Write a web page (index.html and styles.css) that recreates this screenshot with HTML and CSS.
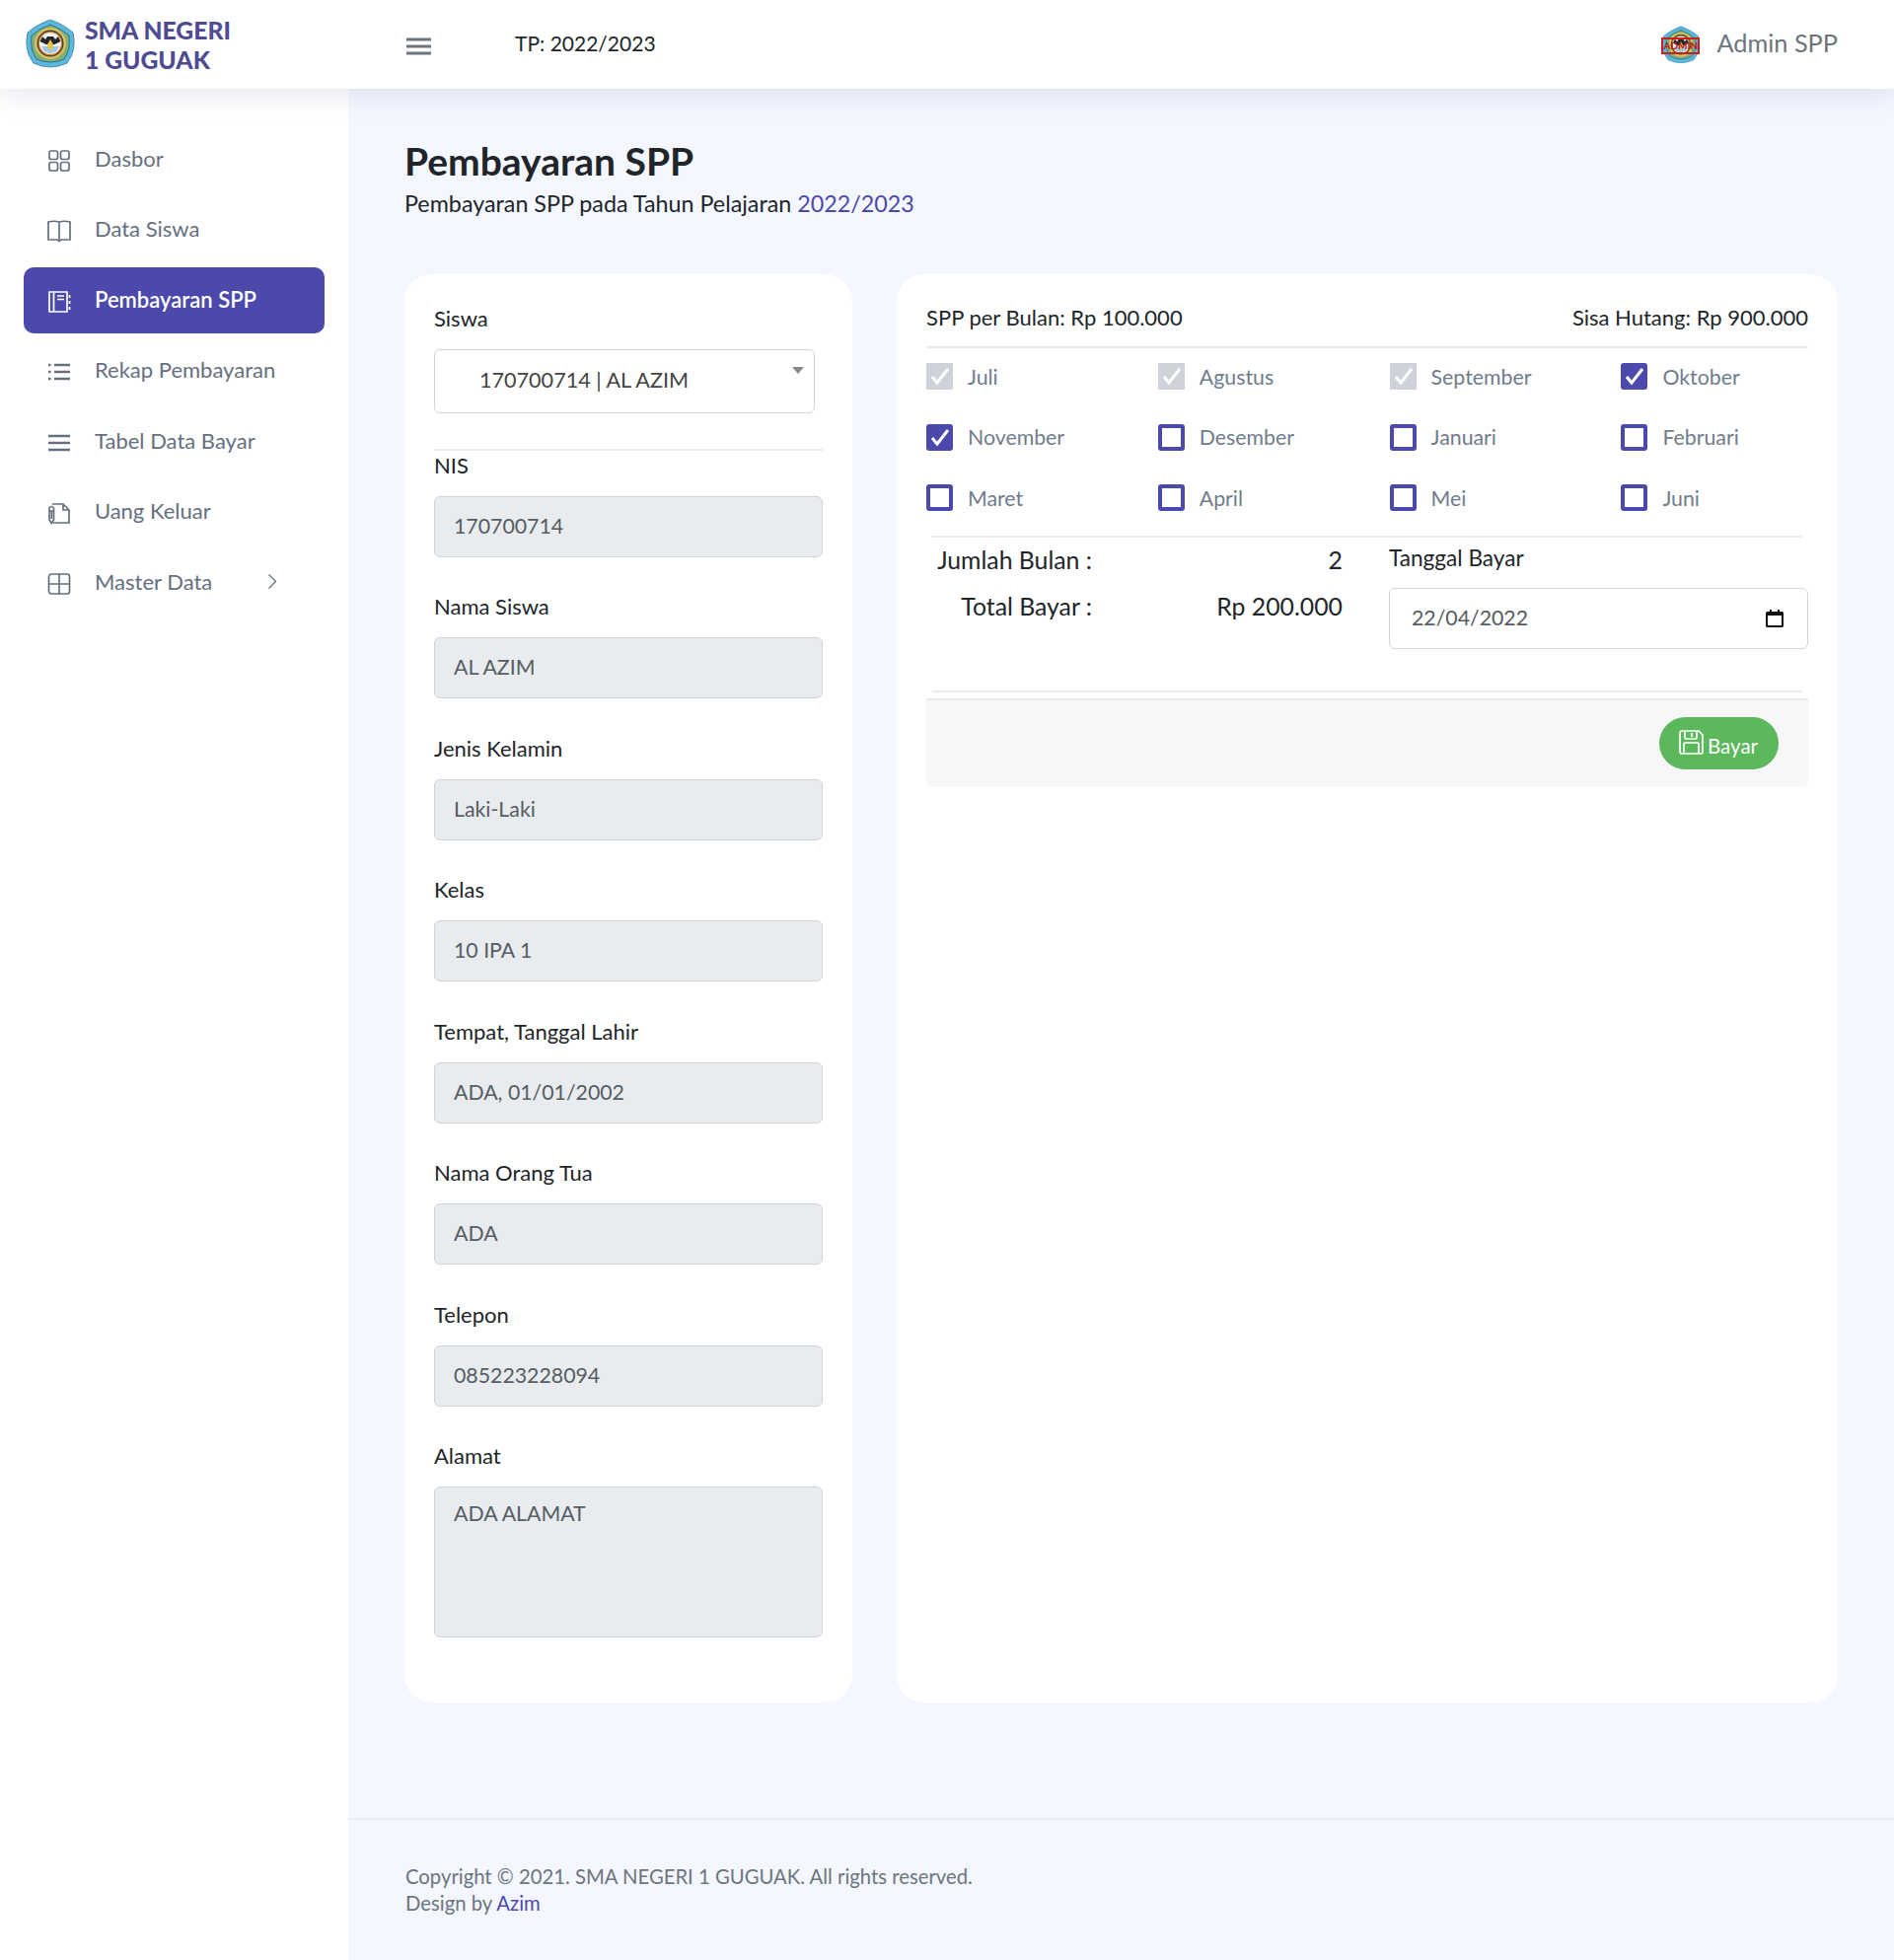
FILE: index.html
```html
<!DOCTYPE html>
<html lang="id">
<head>
<meta charset="utf-8">
<title>Pembayaran SPP</title>
<link rel="stylesheet" href="styles.css">
</head>
<body>
<svg class="defs" width="0" height="0" aria-hidden="true">
  <symbol id="emblem" viewBox="0 0 52 52">
    <path d="M26 1Q40 6 49 14Q53 32 43 45Q26 53 9 45Q-1 32 3 14Q12 6 26 1Z" fill="#5ab7de" stroke="#4f8fa8" stroke-width="1"/>
    <path d="M26 6Q37 10 45 17Q47 31 40 41Q26 47 12 41Q5 31 7 17Q15 10 26 6Z" fill="#7fae78" stroke="#2f6f8f" stroke-width="1"/>
    <circle cx="26" cy="25" r="16" fill="#d9c25a"/>
    <circle cx="26" cy="25" r="13.500" fill="#3e3a34"/>
    <circle cx="26" cy="25" r="12.300" fill="#d2772c"/>
    <circle cx="26" cy="25" r="11" fill="#eef3f8"/>
    <path d="M15.500 23 18 18l3 3 2-3h6l2 3 3-3 2.500 5-6 3H21.500Z" fill="#23252a"/>
    <path d="M17 28h18l-3 5-6 2.500-6-2.500Z" fill="#9cc8e6"/>
    <path d="M26 21l3.500 6-3.500 6-3.500-6Z" fill="#e8c24a"/>
  </symbol>
</svg>
<header class="topbar">
  <div class="brand">
    <svg class="brand-logo"><use href="#emblem"/></svg>
    <div class="brand-name">SMA NEGERI<br>1 GUGUAK</div>
  </div>
  <svg class="burger" viewBox="0 0 25 18"><path d="M0 2h25M0 9h25M0 16h25"/></svg>
  <div class="period">TP: 2022/2023</div>
  <div class="user">
    <div class="user-logo">
      <svg class="user-emblem"><use href="#emblem"/></svg>
      <span class="user-stamp">ADMIN</span>
    </div>
    <span class="user-name">Admin SPP</span>
  </div>
</header>
<div class="shell">
  <aside class="sidebar">
    <ul class="menu">
      <li class="menu-item"><svg class="ico" viewBox="0 0 24 24"><rect x="2" y="2" width="8.500" height="8.500" rx="2"/><rect x="13.500" y="2" width="8.500" height="8.500" rx="2"/><rect x="2" y="13.500" width="8.500" height="8.500" rx="2"/><rect x="13.500" y="13.500" width="8.500" height="8.500" rx="2"/></svg><span>Dasbor</span></li>
      <li class="menu-item"><svg class="ico" viewBox="0 0 24 24"><path d="M1 3q6-1.500 11 0q5-1.500 11 0v18H14l-2 1.500L10 21H1ZM12 3v18"/></svg><span>Data Siswa</span></li>
      <li class="menu-item active"><svg class="ico" viewBox="0 0 24 24"><path d="M2 2h18v20H2ZM6.500 2v20M10 6h7M10 9.500h7M22.500 5v3M22.500 11v3M22.500 17v3"/></svg><span>Pembayaran SPP</span></li>
      <li class="menu-item"><svg class="ico heavy" viewBox="0 0 24 24"><path d="M7 5h16M7 12h16M7 19h16M1 5h2.500M1 12h2.500M1 19h2.500"/></svg><span>Rekap Pembayaran</span></li>
      <li class="menu-item"><svg class="ico heavy" viewBox="0 0 24 24"><path d="M1 5h22M1 12h22M1 19h22"/></svg><span>Tabel Data Bayar</span></li>
      <li class="menu-item"><svg class="ico" viewBox="0 0 24 24"><path d="M5 3h11l6 6v13H6M16 3v6h6M2 7q2-3 4.500 0v12l-2.200 3.500L2 19ZM2 10h4.500M4.300 10v8"/></svg><span>Uang Keluar</span></li>
      <li class="menu-item"><svg class="ico" viewBox="0 0 24 24"><rect x="1.500" y="2" width="21" height="20" rx="2.500"/><path d="M12 2v20M1.500 12h21"/></svg><span>Master Data</span><svg class="chevron" viewBox="0 0 8 15"><path d="M.5 .5 7.500 7.500l-7 7"/></svg></li>
    </ul>
  </aside>
  <main class="main">
    <div class="content">
      <h1 class="title">Pembayaran SPP</h1>
      <p class="subtitle">Pembayaran SPP pada Tahun Pelajaran <span class="accent">2022/2023</span></p>
      <div class="cards">
        <section class="card student">
          <div class="label">Siswa</div>
          <div class="select"><span>170700714 | AL AZIM</span><i class="caret"></i></div>
          <hr class="rule">
          <div class="field"><div class="label">NIS</div><div class="input ro">170700714</div></div>
          <div class="field"><div class="label">Nama Siswa</div><div class="input ro">AL AZIM</div></div>
          <div class="field"><div class="label">Jenis Kelamin</div><div class="input ro">Laki-Laki</div></div>
          <div class="field"><div class="label">Kelas</div><div class="input ro">10 IPA 1</div></div>
          <div class="field"><div class="label">Tempat, Tanggal Lahir</div><div class="input ro">ADA, 01/01/2002</div></div>
          <div class="field"><div class="label">Nama Orang Tua</div><div class="input ro">ADA</div></div>
          <div class="field"><div class="label">Telepon</div><div class="input ro">085223228094</div></div>
          <div class="field"><div class="label">Alamat</div><div class="input ro area">ADA ALAMAT</div></div>
        </section>
        <section class="card payment">
          <div class="summary"><span>SPP per Bulan: Rp 100.000</span><span>Sisa Hutang: Rp 900.000</span></div>
          <div class="months">
            <div class="month"><span class="box paid"><svg viewBox="0 0 27 27"><path d="M6 14l5 6L22 6"/></svg></span><span>Juli</span></div>
            <div class="month"><span class="box paid"><svg viewBox="0 0 27 27"><path d="M6 14l5 6L22 6"/></svg></span><span>Agustus</span></div>
            <div class="month"><span class="box paid"><svg viewBox="0 0 27 27"><path d="M6 14l5 6L22 6"/></svg></span><span>September</span></div>
            <div class="month"><span class="box on"><svg viewBox="0 0 27 27"><path d="M6 14l5 6L22 6"/></svg></span><span>Oktober</span></div>
            <div class="month"><span class="box on"><svg viewBox="0 0 27 27"><path d="M6 14l5 6L22 6"/></svg></span><span>November</span></div>
            <div class="month"><span class="box"></span><span>Desember</span></div>
            <div class="month"><span class="box"></span><span>Januari</span></div>
            <div class="month"><span class="box"></span><span>Februari</span></div>
            <div class="month"><span class="box"></span><span>Maret</span></div>
            <div class="month"><span class="box"></span><span>April</span></div>
            <div class="month"><span class="box"></span><span>Mei</span></div>
            <div class="month"><span class="box"></span><span>Juni</span></div>
          </div>
          <hr class="rule soft">
          <div class="totals">
            <div class="sums">
              <span class="sum-key">Jumlah Bulan :</span><span class="sum-val">2</span>
              <span class="sum-key">Total Bayar :</span><span class="sum-val">Rp 200.000</span>
            </div>
            <div class="date-field">
              <div class="label">Tanggal Bayar</div>
              <div class="input date"><span>22/04/2022</span><svg class="cal" viewBox="0 0 18 18"><path d="M4 0h2v2h6V0h2v2h2.500Q18 2 18 3.500v13q0 1.500-1.500 1.500h-15Q0 18 0 16.500v-13Q0 2 1.500 2H4ZM2 6v10h14V6Z"/></svg></div>
            </div>
          </div>
          <hr class="rule soft">
          <div class="actions">
            <div class="btn"><svg class="save" viewBox="0 0 25 25"><path d="M1 3q0-2 2-2h17l4 4v17q0 2-2 2H3q-2 0-2-2ZM6 1v7q0 1 1 1h10q1 0 1-1V1M13 3v4M5 24V14q0-1 1-1h13q1 0 1 1v10"/></svg><span>Bayar</span></div>
          </div>
        </section>
      </div>
    </div>
    <footer class="foot">
      <div>Copyright © 2021. SMA NEGERI 1 GUGUAK. All rights reserved.</div>
      <div>Design by <span class="accent">Azim</span></div>
    </footer>
  </main>
</div>
</body>
</html>
```

FILE: styles.css
```css
* { box-sizing: border-box; }
html, body { margin: 0; padding: 0; }
body {
  font-family: "Lato", "Noto Sans", sans-serif;
  font-size: 22px;
  line-height: 30px;
  color: #212529;
  background: #f4f7ff;
  min-height: 1987px;
}
.defs { display: block; height: 0; }
.topbar {
  height: 90px;
  background: #fff;
  display: flex;
  align-items: center;
  padding: 0 57px 0 25px;
  position: relative;
  z-index: 2;
  box-shadow: 0 4px 28px rgba(60, 70, 130, .14);
}
.brand { width: 387px; display: flex; align-items: center; gap: 9px; }
.brand-logo { width: 52px; height: 54px; }
.brand-name { font-weight: 900; font-size: 24.700px; line-height: 30px; color: #4e4b92; margin-top: 1px; }
.burger { width: 25px; height: 18px; margin-top: 4px; fill: none; stroke: #6c757d; stroke-width: 3; }
.period { margin-left: 85px; margin-top: -2px; font-size: 21px; color: #212529; }
.user { margin-left: auto; display: flex; align-items: center; gap: 16px; }
.user-logo { width: 40px; height: 42px; position: relative; margin-top: 1px; }
.user-emblem { width: 40px; height: 42px; display: block; }
.user-stamp {
  position: absolute; left: 0; top: 13px; width: 39px; height: 17px;
  border: 2px solid #cc1f1f; color: #b81a1a;
  font-size: 10px; font-weight: 700; line-height: 13px; text-align: center;
}
.user-name { font-size: 25.300px; color: #6c757d; margin-top: -5px; }

.shell { display: flex; min-height: 1897px; }
.sidebar { width: 353px; flex: none; background: #fff; padding-top: 38px; }
.menu { list-style: none; margin: 0; padding: 0; display: flex; flex-direction: column; gap: 4.500px; }
.menu-item {
  width: 305px; height: 67px; margin-left: 24px; padding-left: 24px; border-radius: 10px;
  display: flex; align-items: center; gap: 24px; color: #666f80;
}
.menu-item span { margin-top: -2px; }
.menu-item.active { background: #4b49ac; color: #fff; font-weight: 600; }
.ico { width: 24px; height: 24px; flex: none; margin-top: 2px; fill: none; stroke: currentColor; stroke-width: 1.700; }
.ico.heavy { stroke-width: 2.300; }
.chevron { width: 8px; height: 15px; margin-left: 33px; margin-top: -2px; flex: none; fill: none; stroke: currentColor; stroke-width: 1.300; }

.main { flex: 1; display: flex; flex-direction: column; min-width: 0; }
.content { padding: 51px 57px 0; flex: 1; }
.title { margin: 0; font-size: 39px; line-height: 44px; font-weight: 700; color: #212529; }
.subtitle { margin: 6px 0 0; font-size: 23.300px; }
.accent { color: #4b49ac; }
.cards { margin-top: 57px; display: grid; grid-template-columns: 454px 954px; gap: 45px; }
.card { background: #fff; border-radius: 28px; height: 1448px; padding: 30px; }
.label { margin-bottom: 16px; }
.select {
  width: 386px; height: 65px; border: 1.500px solid #cfd4db; border-radius: 6px;
  padding-left: 45px; display: flex; align-items: center; position: relative; color: #444;
  font-size: 21.600px;
}
.select span { margin-top: -3px; }
.caret {
  position: absolute; right: 10px; top: 17px;
  border-left: 6px solid transparent; border-right: 6px solid transparent; border-top: 7px solid #888;
}
.rule { border: 0; height: 2px; background: #eaeaea; margin: 0; }
.student .rule { margin: 36px 0 0; height: 1.500px; }
.field { margin-bottom: 35.500px; }
.input {
  height: 62px; border: 1.500px solid #cfd4db; border-radius: 6px;
  padding: 0 19px 2px; display: flex; align-items: center; color: #555c63; font-size: 21.300px;
}
.input > span { margin-top: -2px; }
.ro { background: #e9ecef; }
.area { height: 153px; align-items: flex-start; padding-top: 11px; }

.summary { display: flex; justify-content: space-between; margin-top: -1px; padding-bottom: 14px; border-bottom: 2px solid #e8e8e8; }
.months { display: grid; grid-template-columns: repeat(4, 234.800px); row-gap: 34.500px; margin-top: 15px; }
.month { display: flex; align-items: center; gap: 15px; height: 27px; color: #6f7c8c; font-size: 21.300px; }
.box { width: 27px; height: 27px; flex: none; border: 4px solid #4b49ac; border-radius: 3px; position: relative; background: #fff; }
.box svg { position: absolute; left: -4px; top: -4px; width: 27px; height: 27px; fill: none; stroke: #fff; stroke-width: 3; }
.box.on { background: #4b49ac; }
.box.paid { background: #cfd3d9; border-color: #cfd3d9; border-radius: 0; }
.soft { margin: 0 6px; }
.months + .soft { margin-top: 25px; }
.totals { display: flex; height: 155px; }
.sums {
  width: 422px; display: grid; grid-template-columns: 168px 254px; grid-auto-rows: 47px;
  font-size: 24.800px; line-height: 47px; align-content: start; margin-top: -1px;
}
.sum-key { text-align: right; }
.sum-val { text-align: right; }
.date-field { width: 425px; margin-left: 47px; padding-top: 6px; }
.date-field .label { margin-bottom: 15px; font-size: 22.600px; }
.date { background: #fff; padding: 0 24px 0 22px; justify-content: space-between; }
.cal { width: 18px; height: 18px; fill: #111; }
.actions {
  margin-top: 6px; height: 90px; background: #f7f7f7; border-top: 2px solid #e9e9e9;
  border-radius: 0 0 5px 5px; display: flex; justify-content: flex-end; padding: 17px 30px 0 0;
}
.btn {
  width: 121px; height: 53px; border-radius: 27px; background: #5cb85c; color: #fff;
  display: flex; align-items: center; padding-left: 20px; gap: 4px; font-size: 20.500px;
}
.btn span { margin-top: 5px; }
.save { width: 25px; height: 25px; margin-top: -3px; fill: none; stroke: #fff; stroke-width: 1.700; }
.foot {
  height: 144px; border-top: 2px solid #e8ebf3; padding: 44px 58px 0;
  color: #6c757d; line-height: 27px; font-size: 20.300px;
}
```
